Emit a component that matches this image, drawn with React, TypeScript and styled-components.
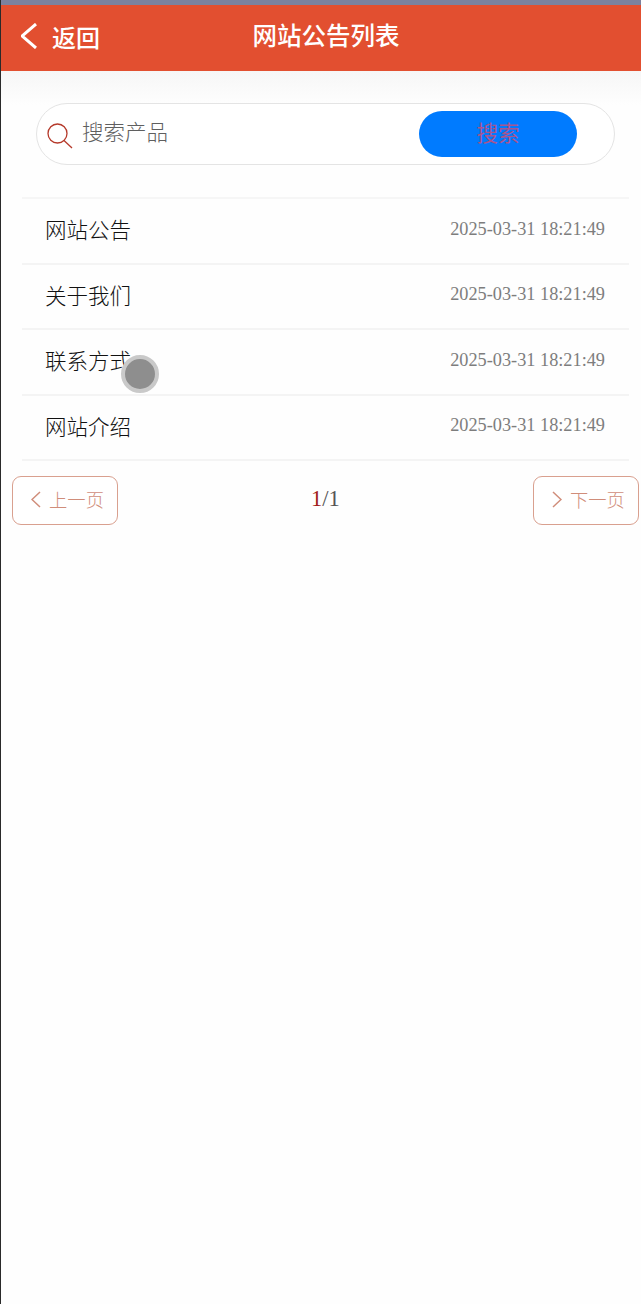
import React from 'react';
import styled, { createGlobalStyle } from 'styled-components';

const GlobalStyle = createGlobalStyle`
    html, body {
        margin: 0;
        padding: 0;
        background: #fff;
    }
    * {
        box-sizing: border-box;
    }
`;

const Page = styled.div`
    position: relative;
    width: 641px;
    height: 1304px;
    overflow: hidden;
    border-left: 1px solid #2a2a2a;
    background: #fefefe;
    font-family: 'Liberation Serif', 'Noto Sans CJK SC', serif;
`;

const TopStrip = styled.div`
    height: 5px;
    margin-left: -1px;
    background: #7b829f;
`;

const Header = styled.header`
    display: grid;
    grid-template-columns: 1fr auto 1fr;
    align-items: center;
    height: 66px;
    margin-left: -1px;
    padding: 0 0 4px 21px;
    background: #e24f30;
    color: #fff;
    font-family: 'Noto Sans CJK SC', sans-serif;
`;

const BackLink = styled.div`
    display: flex;
    align-items: center;
    gap: 15px;
    font-size: 24px;
    font-weight: 500;
`;

const Title = styled.h1`
    margin: 0 10px 4px 0;
    font-size: 24.5px;
    font-weight: 500;
`;

const SearchArea = styled.div`
    padding: 32px 26px 32px 35px;
    background: linear-gradient(#f6f6f6, #fefefe 34px);
`;

const SearchBox = styled.div`
    display: flex;
    align-items: center;
    height: 62px;
    padding: 0 37px 0 10px;
    border: 1px solid #e4e4e4;
    border-radius: 31px;
    background: #fff;
`;

const SearchIcon = styled.svg`
    flex: none;
    width: 26px;
    height: 26px;
    margin-top: 4px;
`;

const Placeholder = styled.span`
    flex: 1;
    margin: 0 0 8px 9px;
    color: #5f5f5f;
    font-family: 'Noto Sans CJK SC', sans-serif;
    font-size: 21.5px;
    font-weight: 300;
`;

const SearchButton = styled.button`
    width: 158px;
    height: 46px;
    padding: 0 0 5px;
    border: none;
    border-radius: 23px;
    background: #007bff;
    color: #a8558f;
    font-family: 'Noto Sans CJK SC', sans-serif;
    font-size: 21.5px;
    font-weight: 400;
`;

const List = styled.ul`
    margin: 0 12px 0 21px;
    padding: 0;
    list-style: none;
    border-top: 2px solid #f6f6f6;
`;

const Row = styled.li`
    display: flex;
    align-items: center;
    justify-content: space-between;
    height: 65.5px;
    padding: 0 24px 3px 23px;
    border-bottom: 2px solid #f4f4f4;
`;

const RowTitle = styled.span`
    margin-bottom: 1px;
    color: #111;
    font-family: 'Noto Sans CJK SC', sans-serif;
    font-size: 21.5px;
    font-weight: 300;
`;

const RowDate = styled.span`
    color: #7d7d7d;
    font-size: 18.3px;
`;

const Pager = styled.nav`
    display: flex;
    align-items: center;
    justify-content: space-between;
    margin: 15px 2px 0 11px;
`;

const PageButton = styled.button`
    display: flex;
    align-items: center;
    justify-content: center;
    gap: 8px;
    width: 106px;
    height: 49px;
    padding: 0 0 3px 5px;
    border: 1px solid #d9a08f;
    border-radius: 9px;
    background: #fff;
    color: #d08d7a;
    font-family: 'Noto Sans CJK SC', sans-serif;
    font-size: 18.3px;
    font-weight: 300;
`;

const PageCount = styled.div`
    margin-bottom: 3px;
    color: #555;
    font-size: 22.5px;
`;

const CurrentPage = styled.span`
    color: #a11c1c;
`;

const TouchDot = styled.div`
    position: absolute;
    left: 120px;
    top: 355px;
    width: 38px;
    height: 38px;
    border: 4px solid #c9c9c9;
    border-radius: 50%;
    background: #8e8e8e;
`;

const Chevron: React.FC<{ dir: 'left' | 'right'; size: number; height: number; weight: number; color: string }> = ({ dir, size, height, weight, color }) => (
    <svg width={size} height={height} viewBox={`0 0 ${size} ${height}`} fill="none" stroke={color} strokeWidth={weight}>
        <polyline points={dir === 'left' ? `${size - 1},1 1,${height / 2} ${size - 1},${height - 1}` : `1,1 ${size - 1},${height / 2} 1,${height - 1}`} />
    </svg>
);

const notices = ['网站公告', '关于我们', '联系方式', '网站介绍'];

const App: React.FC = () => {
    return (
        <Page>
            <GlobalStyle />
            <TopStrip />
            <Header>
                <BackLink>
                    <Chevron dir="left" size={16} height={26} weight={3} color="#fff" />
                    返回
                </BackLink>
                <Title>网站公告列表</Title>
            </Header>
            <SearchArea>
                <SearchBox>
                    <SearchIcon viewBox="0 0 26 26" fill="none" stroke="#b5392a" strokeWidth="1.3">
                        <circle cx="10.5" cy="10.5" r="9.5" />
                        <line x1="17" y1="17.5" x2="25" y2="25" />
                    </SearchIcon>
                    <Placeholder>搜索产品</Placeholder>
                    <SearchButton>搜索</SearchButton>
                </SearchBox>
            </SearchArea>
            <List>
                {notices.map((name) => (
                    <Row key={name}>
                        <RowTitle>{name}</RowTitle>
                        <RowDate>2025-03-31 18:21:49</RowDate>
                    </Row>
                ))}
            </List>
            <Pager>
                <PageButton>
                    <Chevron dir="left" size={10} height={17} weight={1.5} color="#d08d7a" />
                    上一页
                </PageButton>
                <PageCount>
                    <CurrentPage>1</CurrentPage>/1
                </PageCount>
                <PageButton>
                    <Chevron dir="right" size={10} height={17} weight={1.5} color="#d08d7a" />
                    下一页
                </PageButton>
            </Pager>
            <TouchDot />
        </Page>
    );
};

export default App;
